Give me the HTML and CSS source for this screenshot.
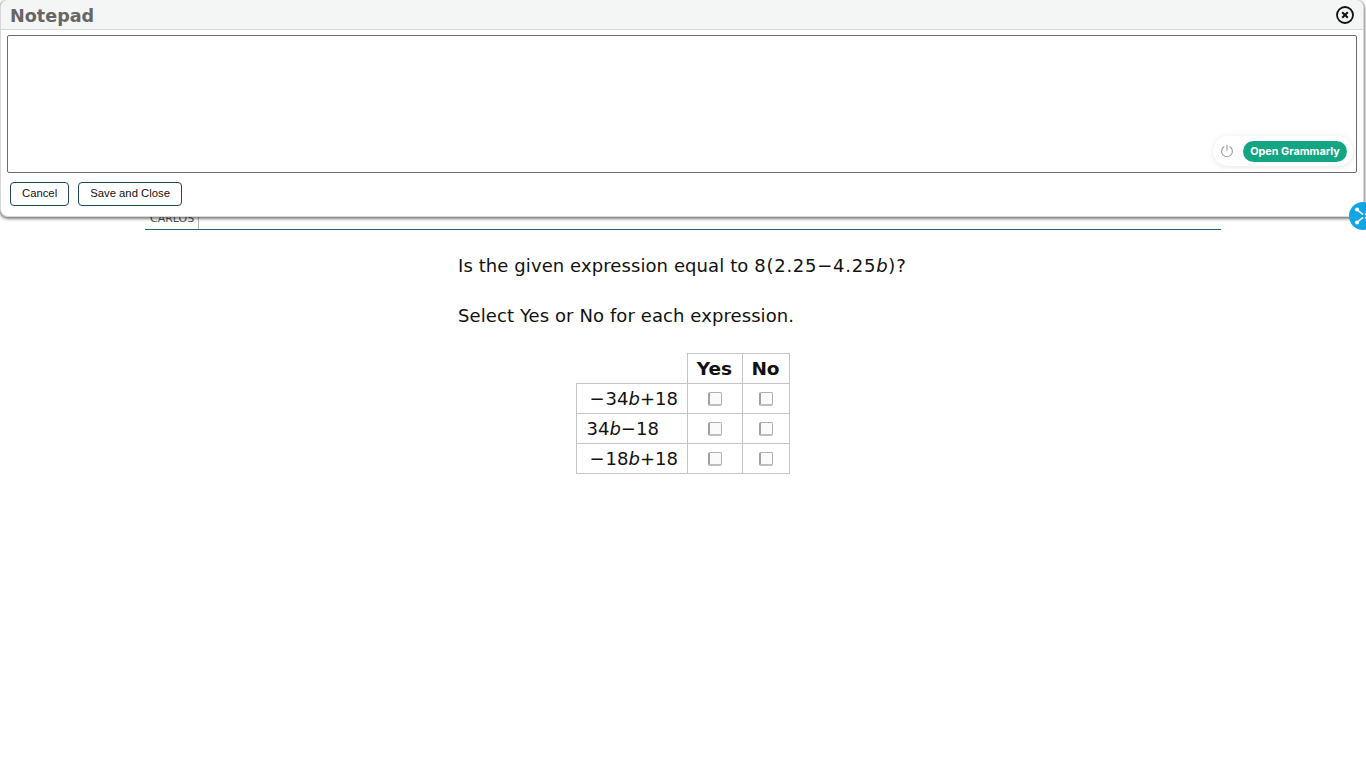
FILE: index.html
```html
<!DOCTYPE html>
<html lang="en">
<head>
<meta charset="utf-8">
<title>Notepad</title>
<link rel="stylesheet" href="styles.css">
</head>
<body>
<main class="page">
  <div class="tabs"><div class="tab">CARLOS</div></div>
  <section class="question">
    <p class="line">Is the given expression equal to <span class="math">8(2.25−4.25<i>b</i>)?</span></p>
    <p class="line second">Select Yes or No for each expression.</p>
    <table class="grid">
      <tr><th class="blank"></th><th class="yes">Yes</th><th class="no">No</th></tr>
      <tr><td class="expr"><span class="lead">−</span>34<i>b</i>+18</td><td class="box"><span class="check"></span></td><td class="box"><span class="check"></span></td></tr>
      <tr><td class="expr">34<i>b</i>−18</td><td class="box"><span class="check"></span></td><td class="box"><span class="check"></span></td></tr>
      <tr><td class="expr"><span class="lead">−</span>18<i>b</i>+18</td><td class="box"><span class="check"></span></td><td class="box"><span class="check"></span></td></tr>
    </table>
  </section>
</main>
<div class="expand">
  <svg width="32" height="28" viewBox="0 0 32 28" fill="none" stroke="#fff" stroke-width="1.6">
    <path d="M9 8.5l5 4M9 19.5l5-4M21 8.5l-5 4M21 19.5l-5-4"/>
    <circle cx="8" cy="7.5" r="2" fill="#fff" stroke="none"/>
    <circle cx="8" cy="20.5" r="2" fill="#fff" stroke="none"/>
    <circle cx="22" cy="7.5" r="2" fill="#fff" stroke="none"/>
    <circle cx="22" cy="20.5" r="2" fill="#fff" stroke="none"/>
  </svg>
</div>
<div class="modal">
  <header class="modal-head">
    <h1 class="modal-title">Notepad</h1>
    <button class="close" aria-label="Close">
      <svg width="18" height="18" viewBox="0 0 18 18" fill="none" stroke="#111">
        <circle cx="9" cy="9" r="8" stroke-width="1.8"/>
        <path d="M6.2 6.2l5.6 5.6M11.8 6.2l-5.6 5.6" stroke-width="2"/>
      </svg>
    </button>
  </header>
  <div class="editor">
    <div class="grammarly">
      <svg class="power" width="14" height="14" viewBox="0 0 14 14" fill="none" stroke="#9a9a9a" stroke-width="1.1">
        <path d="M4.3 2.6a5.4 5.4 0 1 0 5.4 0M7 .8v6"/>
      </svg>
      <span class="open">Open Grammarly</span>
    </div>
  </div>
  <div class="actions">
    <button class="btn">Cancel</button>
    <button class="btn">Save and Close</button>
  </div>
</div>
</body>
</html>
```
FILE: styles.css
```css
html, body {
  margin: 0;
  padding: 0;
  background: #fff;
  height: 768px;
  overflow: hidden;
}
body {
  font-family: "DejaVu Sans", Verdana, sans-serif;
  color: #111;
}
.page {
  padding-top: 210px;
}
.tabs {
  margin: 0 145px;
  height: 19px;
  border-bottom: 1px solid #1f6572;
  display: flex;
}
.tab {
  width: 54px;
  border-right: 1px solid #b5b5b5;
  font: 11px/17px "DejaVu Sans", sans-serif;
  color: #555;
  padding-left: 5px;
  box-sizing: border-box;
}
.question {
  width: 450px;
  margin: 0 auto;
  padding-top: 25px;
  font-size: 18px;
  letter-spacing: .09px;
}
.line {
  margin: 0;
  line-height: 22px;
  white-space: nowrap;
}
.second {
  margin-top: 28px;
}
.math {
  letter-spacing: .75px;
}
.grid {
  border-collapse: collapse;
  margin: 26px auto 0;
  position: relative;
  left: -0.5px;
}
.grid th, .grid td {
  border: 1px solid #c4c4c4;
  height: 29px;
  padding: 0;
  box-sizing: content-box;
  font-size: 18px;
  line-height: 22px;
  letter-spacing: 0;
}
.grid th {
  font-size: 18.5px;
  font-weight: 700;
  text-align: center;
}
.grid .blank {
  border-top: 0;
  border-left: 0;
}
.yes { width: 54px; }
.no { width: 46px; }
.grid .expr {
  width: 100px;
  padding-left: 10px;
  white-space: nowrap;
  text-align: left;
}
.lead {
  margin: 0 1px 0 3px;
}
.box {
  text-align: center;
  vertical-align: middle;
}
.check {
  display: inline-block;
  width: 11px;
  height: 11px;
  margin-bottom: 2px;
  border: 1px solid #b0b0b0;
  border-left: 2px solid #a0a0a0;
  border-bottom: 2px solid #bdbdbd;
  border-radius: 2px;
  background: #fafafa;
  vertical-align: middle;
}
.modal {
  position: absolute;
  top: 0;
  left: 0;
  width: 1364px;
  height: 217px;
  box-sizing: border-box;
  background: #fff;
  border: 1px solid #d8d8d8;
  border-top: 0;
  border-radius: 8px;
  box-shadow: 0 1px 3px 1px rgba(0, 0, 0, .5);
  display: flex;
  flex-direction: column;
}
.modal-head {
  height: 30px;
  flex: none;
  box-sizing: border-box;
  background: #f4f6f6;
  border-bottom: 1px solid #d4d6d6;
  display: flex;
  align-items: center;
  justify-content: space-between;
  padding: 0 9px;
  border-radius: 8px 8px 0 0;
}
.modal-title {
  margin: 2px 0 0;
  font: 700 17.6px/26px "DejaVu Sans", sans-serif;
  color: #666;
}
.close {
  border: 0;
  background: none;
  padding: 0;
  width: 18px;
  height: 18px;
  display: flex;
}
.editor {
  flex: none;
  height: 138px;
  margin: 5px 6px 0;
  box-sizing: border-box;
  border: 1px solid #6c6c6c;
  border-radius: 2px;
  background: #fff;
  position: relative;
}
.grammarly {
  position: absolute;
  right: 3px;
  bottom: 6px;
  height: 30px;
  box-sizing: border-box;
  padding: 0 6px 0 7px;
  display: flex;
  align-items: center;
  gap: 9px;
  background: #fff;
  border-radius: 15px;
  box-shadow: 0 1px 6px rgba(0, 0, 0, .1);
}
.power {
  display: block;
}
.open {
  height: 21px;
  width: 104px;
  text-align: center;
  border-radius: 11px;
  background: #14a683;
  color: #fff;
  font: 700 10.8px/21px Inter, "Liberation Sans", sans-serif;
  white-space: nowrap;
}
.actions {
  display: flex;
  gap: 9px;
  padding: 9px 0 0 9px;
}
.btn {
  height: 24px;
  padding: 0 11px 2px;
  background: #fff;
  border: 1px solid #1f4a5c;
  border-radius: 4px;
  font: 11.3px/20px "Liberation Sans", Arial, sans-serif;
  color: #111;
}
.expand {
  position: absolute;
  left: 1349px;
  top: 202px;
  width: 28px;
  height: 28px;
  border-radius: 50%;
  background: #12a5e6;
  overflow: hidden;
  z-index: 2;
}
.expand svg {
  display: block;
}
```
